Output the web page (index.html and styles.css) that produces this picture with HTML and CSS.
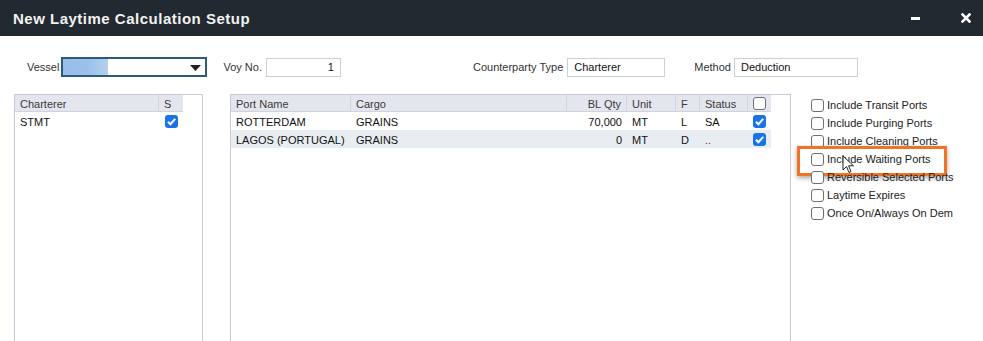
FILE: index.html
```html
<!DOCTYPE html>
<html lang="en">
<head>
    <meta charset="UTF-8">
    <title>New Laytime Calculation Setup</title>
    <link rel="stylesheet" href="styles.css">
</head>
<body>
    <div class="dialog">
        <div class="titlebar">
            <span class="title">New Laytime Calculation Setup</span>
            <div class="win-buttons">
                <span class="minimize"></span>
                <svg class="close" width="10" height="10" viewBox="0 0 10 10">
                    <path d="M1.5 1.5 L8.5 8.5 M8.5 1.5 L1.5 8.5" stroke="#fff" stroke-width="2.6" stroke-linecap="square"/>
                </svg>
            </div>
        </div>

        <div class="form-row">
            <label class="lbl lbl-vessel">Vessel</label>
            <div class="select">
                <span class="select-value"></span>
                <svg class="caret" width="11" height="6" viewBox="0 0 11 6"><path d="M0 0 H11 L5.5 6 Z" fill="#222"/></svg>
            </div>
            <label class="lbl lbl-voy">Voy No.</label>
            <div class="input input-voy">1</div>
            <label class="lbl lbl-cp">Counterparty Type</label>
            <div class="input input-cp">Charterer</div>
            <label class="lbl lbl-method">Method</label>
            <div class="input input-method">Deduction</div>
        </div>

        <div class="main">
            <div class="grid grid-charterer">
                <div class="row head">
                    <div class="cell">Charterer</div>
                    <div class="cell">S</div>
                </div>
                <div class="row">
                    <div class="cell">STMT</div>
                    <div class="cell center"><span class="cb checked"></span></div>
                </div>
            </div>

            <div class="grid grid-ports">
                <div class="row head">
                    <div class="cell">Port Name</div>
                    <div class="cell">Cargo</div>
                    <div class="cell right">BL Qty</div>
                    <div class="cell">Unit</div>
                    <div class="cell">F</div>
                    <div class="cell">Status</div>
                    <div class="cell center"><span class="cb"></span></div>
                </div>
                <div class="row">
                    <div class="cell">ROTTERDAM</div>
                    <div class="cell">GRAINS</div>
                    <div class="cell right">70,000</div>
                    <div class="cell">MT</div>
                    <div class="cell">L</div>
                    <div class="cell">SA</div>
                    <div class="cell center"><span class="cb checked"></span></div>
                </div>
                <div class="row alt">
                    <div class="cell">LAGOS (PORTUGAL)</div>
                    <div class="cell">GRAINS</div>
                    <div class="cell right">0</div>
                    <div class="cell">MT</div>
                    <div class="cell">D</div>
                    <div class="cell status-dots">..</div>
                    <div class="cell center"><span class="cb checked"></span></div>
                </div>
            </div>

            <div class="options">
                <div class="option"><span class="cb"></span>Include Transit Ports</div>
                <div class="option"><span class="cb"></span>Include Purging Ports</div>
                <div class="option"><span class="cb"></span>Include Cleaning Ports</div>
                <div class="option highlight"><span class="cb"></span>Include Waiting Ports
                    <svg class="cursor" width="14" height="20" viewBox="0 0 14 20">
                        <path d="M1 1 L1 15 L4.5 11.5 L7 17.5 L9 16.5 L6.6 10.8 L11.5 10.8 Z" fill="#fff" stroke="#222" stroke-width="1" stroke-linejoin="round"/>
                    </svg>
                </div>
                <div class="option"><span class="cb"></span>Reversible Selected Ports</div>
                <div class="option"><span class="cb"></span>Laytime Expires</div>
                <div class="option"><span class="cb"></span>Once On/Always On Dem</div>
            </div>
        </div>
    </div>
</body>
</html>
```

FILE: styles.css
```css
* {
    margin: 0;
    padding: 0;
    box-sizing: border-box;
}

body {
    width: 983px;
    height: 341px;
    overflow: hidden;
    background: #fff;
    font-family: 'Liberation Sans', Arial, sans-serif;
    font-size: 11px;
    color: #222;
}

.dialog {
    height: 341px;
}

/* title bar */
.titlebar {
    height: 36px;
    background: #222930;
    display: flex;
    align-items: center;
    justify-content: space-between;
    padding: 0 12px 0 13px;
}

.title {
    color: #f2f2f2;
    font-size: 15px;
    font-weight: bold;
    letter-spacing: 0.5px;
}

.win-buttons {
    display: flex;
    align-items: center;
    gap: 41px;
}

.minimize {
    width: 9px;
    height: 3px;
    background: #fff;
}

/* top form */
.form-row {
    display: flex;
    align-items: center;
    height: 20px;
    margin-top: 21px;
    padding-left: 27px;
}

.lbl {
    color: #333;
}

.select {
    width: 146px;
    height: 20px;
    margin-left: 2px;
    border: 2px solid #2b5d78;
    display: flex;
    align-items: center;
    justify-content: space-between;
    padding-right: 4px;
}

.select-value {
    width: 45px;
    height: 16px;
    background: linear-gradient(90deg, #98bee9 0%, #9cc0ea 55%, #b3d0ef 100%);
}

.caret {
    margin-top: 1px;
}

.input {
    height: 19px;
    border: 1px solid #c9d0da;
    padding: 2px 6px;
    color: #111;
}

.lbl-voy {
    margin-left: 16px;
}

.input-voy {
    width: 75px;
    margin-left: 4px;
    text-align: right;
}

.lbl-cp {
    margin-left: 132px;
}

.input-cp {
    width: 98px;
    margin-left: 4px;
}

.lbl-method {
    margin-left: 29px;
}

.input-method {
    width: 124px;
    margin-left: 3px;
}

/* grids */
.main {
    display: flex;
    align-items: flex-start;
    margin-top: 17px;
    padding-left: 14px;
}

.grid {
    height: 260px;
    border: 1px solid #c8ccd8;
}

.grid-charterer {
    width: 189px;
}

.grid-ports {
    width: 561px;
    margin-left: 27px;
}

.row {
    display: grid;
    height: 18px;
    align-items: center;
}

.grid-charterer .row {
    grid-template-columns: 144px 24px;
}

.grid-ports .row {
    grid-template-columns: 120px 216px 60px 49px 24px 48px 23px;
}

.row.head {
    height: 17px;
}

.row.head .cell {
    background: #e4e6ee;
    color: #3a3a3a;
    border-right: 1px solid #d2d5de;
    border-bottom: 1px solid #cfd3dc;
    height: 17px;
}

.row.head .cell:last-child {
    border-right: none;
}

.row.alt .cell {
    background: #e7edf1;
}

.cell {
    height: 18px;
    padding: 1px 5px 0;
    display: flex;
    align-items: center;
    white-space: nowrap;
    color: #111;
}

.cell.right {
    justify-content: flex-end;
}

.cell.center {
    justify-content: center;
    padding: 0;
}

.status-dots {
    color: #8b1a3a;
}

/* checkboxes */
.cb {
    display: inline-block;
    width: 13px;
    height: 13px;
    border: 1px solid #6f6f6f;
    border-radius: 3px;
    background: #fff;
    flex: none;
}

.cb.checked {
    border: none;
    background: #1a73e8 url("data:image/svg+xml;utf8,<svg xmlns='http://www.w3.org/2000/svg' width='13' height='13'><path d='M3 6.8 L5.4 9.2 L10.2 3.8' fill='none' stroke='white' stroke-width='2'/></svg>") no-repeat center;
}

/* options */
.options {
    margin-left: 20px;
    padding-top: 2px;
}

.option {
    position: relative;
    display: flex;
    align-items: center;
    gap: 3px;
    height: 18px;
    color: #222;
}

.option.highlight::after {
    content: '';
    position: absolute;
    left: -14px;
    top: -4px;
    width: 144px;
    height: 24px;
    border: 3px solid #ef7526;
    box-shadow: 0 2px 5px rgba(0, 0, 0, 0.35);
}

.cursor {
    position: absolute;
    left: 31px;
    top: 5px;
    z-index: 2;
}
```
